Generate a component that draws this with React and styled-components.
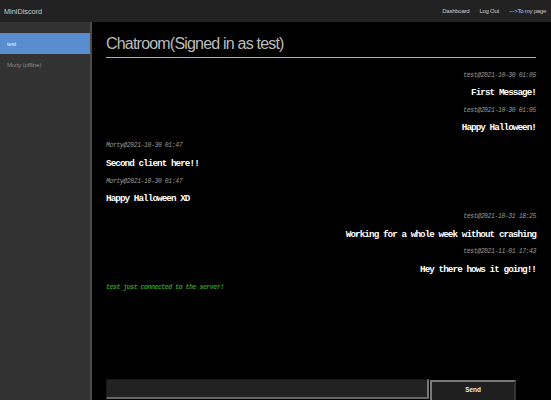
import React from "react";
import styled, { createGlobalStyle } from "styled-components";

const Global = createGlobalStyle`
  html, body { margin: 0; padding: 0; background: #000; overflow: hidden; }
  body { font-family: "Liberation Sans", Arial, sans-serif; }
  * { box-sizing: border-box; }
`;

const Page = styled.div`
  width: 551px;
  height: 400px;
  display: flex;
  flex-direction: column;
`;

const NavBar = styled.nav`
  height: 22px;
  flex: none;
  background: #222;
  display: flex;
  align-items: center;
  justify-content: space-between;
  padding: 0 5px 0 4px;
`;

const Brand = styled.span`
  font-size: 7.3px;
  color: #c8c8c8;
`;

const NavLinks = styled.div`
  display: flex;
  align-items: center;
  gap: 10px;
`;

const NavLink = styled.a`
  font-size: 6px;
  letter-spacing: -0.25px;
  color: #c8c8c8;
  text-decoration: none;
`;

const Body = styled.div`
  flex: 1;
  display: flex;
  min-height: 0;
`;

const Sidebar = styled.aside`
  width: 92px;
  flex: none;
  background: #323232;
  border-right: 2px solid #4c4c4c;
  padding-top: 11px;
`;

const UserItem = styled.div`
  height: 21px;
  display: flex;
  align-items: center;
  padding-left: 7px;
  font-size: 6px;
  letter-spacing: -0.15px;
  background: ${(p) => (p.$active ? "#5a8dcf" : "transparent")};
  color: ${(p) => (p.$active ? "#e8eef8" : "#8a8a8a")};
`;

const Main = styled.main`
  flex: 1;
  background: #000;
  display: flex;
  flex-direction: column;
  padding: 12px 15px 0 14px;
`;

const Title = styled.h1`
  margin: 0;
  font-size: 16px;
  line-height: 20px;
  letter-spacing: -0.8px;
  font-weight: normal;
  color: #bdbdbd;
  padding-bottom: 3px;
  border-bottom: 1px solid #b0b0b0;
`;

const Messages = styled.div`
  flex: 1;
  padding-top: 8.5px;
  display: flex;
  flex-direction: column;
`;

const Meta = styled.div`
  font-family: "Liberation Mono", "Courier New", monospace;
  font-style: italic;
  font-size: 6.5px;
  letter-spacing: -0.44px;
  line-height: 17.6px;
  color: #9a9a9a;
  text-align: ${(p) => (p.$mine ? "right" : "left")};
`;

const Text = styled.div`
  font-family: "Liberation Mono", "Courier New", monospace;
  font-weight: bold;
  font-size: 9.3px;
  letter-spacing: -0.94px;
  line-height: 17.8px;
  color: #fff;
  text-align: ${(p) => (p.$mine ? "right" : "left")};
`;

const Notice = styled.div`
  font-family: "Liberation Mono", "Courier New", monospace;
  font-style: italic;
  font-weight: bold;
  font-size: 6.5px;
  letter-spacing: -0.44px;
  line-height: 17.6px;
  color: #2f9a22;
`;

const Form = styled.form`
  flex: none;
  height: 21px;
  display: flex;
  align-items: flex-start;
  gap: 1px;
`;

const Input = styled.input`
  width: 323px;
  height: 20px;
  background: #222;
  border-style: solid;
  border-width: 1px 2px 2px 1px;
  border-color: #1a1a1a #777 #666 #1a1a1a;
  outline: none;
  padding: 0 4px;
  color: #eee;
  font-size: 8px;
`;

const SendButton = styled.button`
  width: 86px;
  height: 22px;
  margin-top: 1px;
  background: #1f1f1f;
  border-style: solid;
  border-width: 2px;
  border-color: #7a7a7a #333 #333 #7a7a7a;
  color: #eee;
  font-family: "Liberation Sans", Arial, sans-serif;
  font-weight: bold;
  font-size: 6.4px;
  padding: 0 0 2px;
  line-height: 16px;
  text-align: center;
`;

const messages = [
  { user: "test", time: "2021-10-30 01:05", text: "First Message!" },
  { user: "test", time: "2021-10-30 01:05", text: "Happy Halloween!" },
  { user: "Morty", time: "2021-10-30 01:47", text: "Second client here!!" },
  { user: "Morty", time: "2021-10-30 01:47", text: "Happy Halloween XD" },
  { user: "test", time: "2021-10-31 18:25", text: "Working for a whole week without crashing" },
  { user: "test", time: "2021-11-01 17:43", text: "Hey there hows it going!!" },
];

export default function App() {
  return (
    <>
      <Global />
      <Page>
        <NavBar>
          <Brand>MiniDiscord</Brand>
          <NavLinks>
            <NavLink href="#">Dashboard</NavLink>
            <NavLink href="#">Log Out</NavLink>
            <NavLink href="#">---&gt;To my page</NavLink>
          </NavLinks>
        </NavBar>
        <Body>
          <Sidebar>
            <UserItem $active>test</UserItem>
            <UserItem>Morty (offline)</UserItem>
          </Sidebar>
          <Main>
            <Title>Chatroom(Signed in as test)</Title>
            <Messages>
              {messages.map((m, i) => {
                const mine = m.user === "test";
                return (
                  <React.Fragment key={i}>
                    <Meta $mine={mine}>
                      {m.user}@{m.time}
                    </Meta>
                    <Text $mine={mine}>{m.text}</Text>
                  </React.Fragment>
                );
              })}
              <Notice>test just connected to the server!</Notice>
            </Messages>
            <Form onSubmit={(e) => e.preventDefault()}>
              <Input type="text" />
              <SendButton type="submit">Send</SendButton>
            </Form>
          </Main>
        </Body>
      </Page>
    </>
  );
}
